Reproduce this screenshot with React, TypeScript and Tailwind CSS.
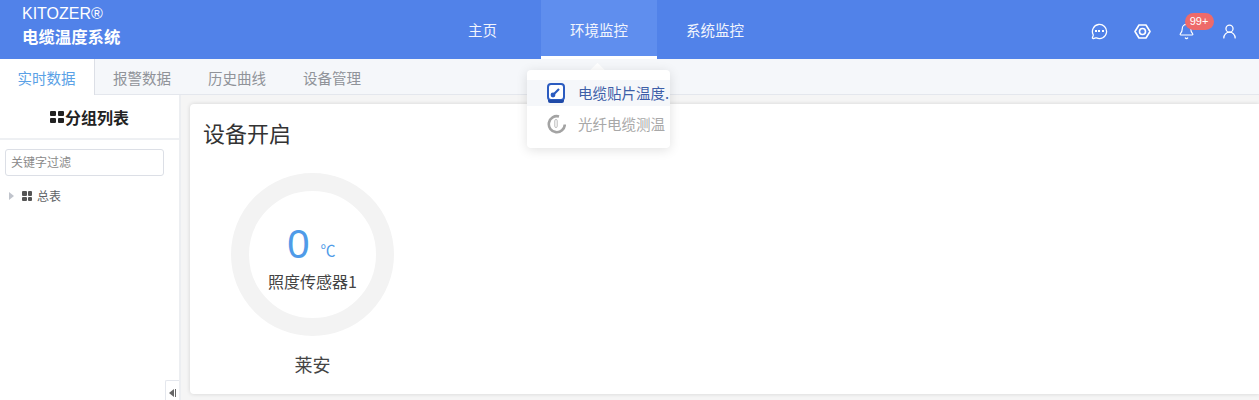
import { Bell, MessageCircle, UserRound } from 'lucide-react';

const NAV = ['主页', '环境监控', '系统监控'];
const TABS = ['实时数据', '报警数据', '历史曲线', '设备管理'];

function GridIcon({ className }: { className: string }) {
  return (
    <span className={`grid grid-cols-2 ${className}`}>
      <i className="bg-current rounded-[1px]" />
      <i className="bg-current rounded-[1px]" />
      <i className="bg-current rounded-[1px]" />
      <i className="bg-current rounded-[1px]" />
    </span>
  );
}

function Header() {
  return (
    <header className="h-[59px] bg-[#5182e9] flex text-white shrink-0">
      <div className="w-[468px] pl-[22px] pt-[5px]">
        <p className="text-[16px] leading-[18px] font-['Liberation_Sans']">KITOZER®</p>
        <p className="text-[16.4px] leading-[26px] font-bold">电缆温度系统</p>
      </div>
      <nav className="flex">
        {NAV.map((item, i) => (
          <div
            key={item}
            className={
              i === 1
                ? 'h-[59px] px-[29px] bg-[#5f8eee] border-b-[3px] border-white text-[14.5px] leading-[60px] text-[#f2f5fd]'
                : i === 0
                  ? 'h-[59px] pr-[44px] text-[14.5px] leading-[60px] text-[#f2f5fd]'
                  : 'h-[59px] px-[29px] text-[14.5px] leading-[60px] text-[#f2f5fd]'
            }
          >
            {item}
          </div>
        ))}
      </nav>
      <div className="ml-auto flex items-center pr-[21px] pt-[3px] gap-[26.5px]">
        <span className="relative w-[17px] h-[17px]">
          <MessageCircle className="w-[17px] h-[17px]" strokeWidth={1.8} />
          <span className="absolute left-[4px] top-[7px] w-[9px] h-[2px] border-t-2 border-dotted border-white" />
        </span>
        <svg viewBox="0 0 17 17" className="w-[17px] h-[17px]" fill="none" stroke="currentColor" strokeWidth="1.6" strokeLinejoin="round">
          <path d="M5 2h7l4 6.5-4 6.5H5L1 8.500z" />
          <circle cx="8.500" cy="8.500" r="3" />
        </svg>
        <span className="relative w-[17px] h-[17px]">
          <Bell className="w-[17px] h-[17px]" strokeWidth={1.6} />
          <span className="absolute left-[7px] top-[-10px] w-[29px] h-[17px] rounded-full bg-[#ee6a6a] text-[11px] leading-[17px] text-center font-['Liberation_Sans']">
            99+
          </span>
        </span>
        <UserRound className="w-[17px] h-[17px]" strokeWidth={1.8} />
      </div>
    </header>
  );
}

function Tabs() {
  return (
    <div className="h-9 bg-[#f5f7fa] border-b border-[#e4e7ed] flex shrink-0 text-[14.5px]">
      {TABS.map((tab, i) => (
        <div
          key={tab}
          className={
            i === 0
              ? 'w-[95px] h-9 bg-white border-r border-[#dcdfe6] text-[#5aa1e6] text-center leading-[37px] pr-[1px]'
              : 'w-[95px] text-[#909399] text-center leading-[37px] pr-[1px]'
          }
        >
          {tab}
        </div>
      ))}
    </div>
  );
}

function Sidebar() {
  return (
    <aside className="relative w-[181px] bg-white border-r-2 border-[#eceef1] shrink-0">
      <div className="h-[45px] border-b-2 border-[#eef0f3] flex items-center justify-center text-[#222] font-bold text-base">
        <GridIcon className="w-[14px] h-[12px] gap-[2px] mr-[1px] text-[#222]" />
        分组列表
      </div>
      <div className="mx-[5px] mt-[9px] h-[27px] w-[159px] border border-[#dcdfe6] rounded-[3px] pl-[5px] text-xs leading-[24px] text-[#8a8a8a]">
        关键字过滤
      </div>
      <div className="flex items-center mt-[12px] pl-[9px] h-4 text-xs text-[#606266]">
        <span className="w-0 h-0 border-y-[4px] border-y-transparent border-l-[5px] border-l-[#c0c4cc] mr-[8px]" />
        <GridIcon className="w-[10px] h-[10px] gap-[1px] mr-[5px] text-[#555]" />
        总表
      </div>
      <div className="absolute right-0 bottom-0 w-[14px] h-[20px] border-l border-t border-[#e4e7ed] rounded-tl-[2px] flex items-end justify-center pb-[3px] gap-[1px]">
        <span className="w-0 h-0 border-y-[4px] border-y-transparent border-r-[5px] border-r-[#666]" />
        <span className="w-[1px] h-2 bg-[#666]" />
      </div>
    </aside>
  );
}

function Gauge() {
  return (
    <div className="ml-[41px] mt-[25px] w-[163px]">
      <div className="w-[163px] h-[163px] rounded-full border-[18px] border-[#f3f3f3] flex flex-col items-center">
        <div className="flex items-end h-[50px] mt-[28px] text-[#4f9be8] -ml-[2px]">
          <span className="text-[40px] leading-[50px] font-['Liberation_Sans']">0</span>
          <span className="text-[15px] leading-[24px] ml-[11px] mb-[7px]">℃</span>
        </div>
        <p className="text-[16px] leading-[24px] text-[#444] whitespace-nowrap">照度传感器1</p>
      </div>
      <p className="text-center text-lg leading-[26px] mt-[15px] text-[#444]">莱安</p>
    </div>
  );
}

function Card() {
  return (
    <section className="flex-1 mt-[9px] mb-[6px] ml-[9px] bg-white rounded-l-[4px] shadow-[0_0_4px_rgba(0,0,0,0.14)]">
      <h2 className="ml-[14px] mt-[12px] -translate-x-[1px] text-[22px] leading-[32px] text-[#333]">设备开启</h2>
      <Gauge />
    </section>
  );
}

function Dropdown() {
  return (
    <div className="absolute left-[527px] top-[70px] w-[143px] h-[78px] bg-white rounded-[4px] shadow-[0_2px_12px_rgba(0,0,0,0.12)] pt-[10px] text-[14.500px]">
      <div className="h-[26px] bg-[#f5f7fa] flex items-center pl-[20px] text-[#3d5ea8] whitespace-nowrap">
        <svg viewBox="0 0 18 21" className="w-[18px] h-[21px] mr-[13px] shrink-0">
          <rect x="1" y="1" width="16" height="16" rx="3" fill="#fff" stroke="#2a5bc0" strokeWidth="2" />
          <path d="M1 17h16v1q0 2-2 2H3q-2 0-2-2z" fill="#1f4aa8" />
          <path d="M6 12l6-6" stroke="#2a5bc0" strokeWidth="2.200" />
          <circle cx="6" cy="12" r="2.400" fill="#2a5bc0" />
        </svg>
        电缆贴片温度.
      </div>
      <div className="h-[26px] mt-[5px] flex items-center pl-[19px] text-[#a8a8a8] whitespace-nowrap">
        <svg viewBox="0 0 20 20" className="w-5 h-5 mr-[12px] shrink-0" fill="none">
          <path d="M13 2.500a8 8 0 1 0 5.800 8" stroke="#a3a3a3" strokeWidth="2.600" />
          <rect x="8.800" y="5.500" width="2.400" height="8" rx="1.200" stroke="#bbb" strokeWidth="1" />
        </svg>
        光纤电缆测温
      </div>
    </div>
  );
}

export default function App() {
  return (
    <div className="relative w-[1259px] h-[400px] overflow-hidden flex flex-col bg-[#f5f5f5] font-['Noto_Sans_CJK_SC','Liberation_Sans',sans-serif]">
      <Header />
      <Tabs />
      <div className="flex flex-1 min-h-0">
        <Sidebar />
        <Card />
      </div>
      <span className="absolute left-[592px] top-[65px] w-[11px] h-[11px] rotate-45 bg-white" />
      <Dropdown />
    </div>
  );
}
